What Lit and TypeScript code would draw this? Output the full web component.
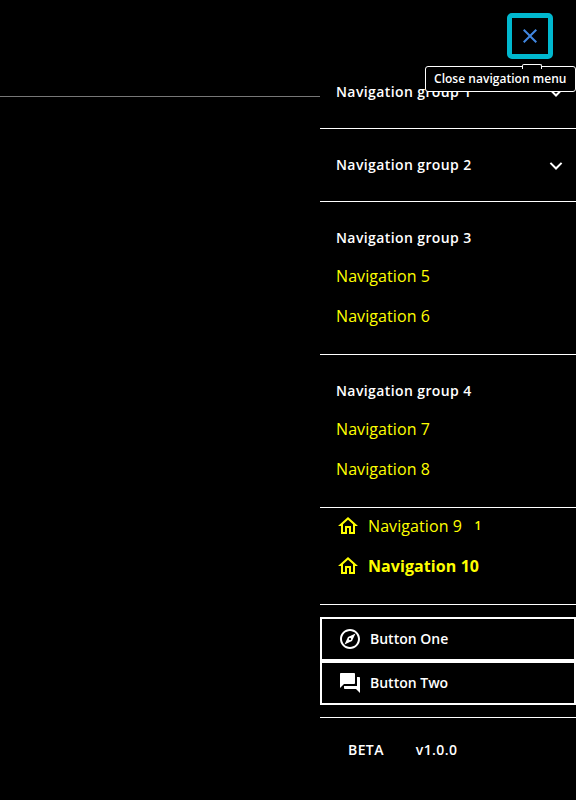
import { LitElement, html, css, svg } from "lit";
import { customElement } from "lit/decorators.js";

const icons = {
  close: svg`<path d="M19 6.41 17.59 5 12 10.59 6.41 5 5 6.41 10.59 12 5 17.59 6.41 19 12 13.41 17.59 19 19 17.59 13.41 12z"/>`,
  chevron: svg`<path d="M7.1 8.2 12 13.1l4.9-4.9L18.3 9.6 12 15.9 5.7 9.6z"/>`,
  home: svg`<path d="M12 5.69l5 4.5V18h-2v-6H9v6H7v-7.81l5-4.5M12 3 2 12h3v8h6v-6h2v6h6v-8h3L12 3z"/>`,
  compass: svg`<path d="M12 2C6.48 2 2 6.48 2 12s4.48 10 10 10 10-4.48 10-10S17.52 2 12 2zm0 18c-4.41 0-8-3.59-8-8s3.59-8 8-8 8 3.59 8 8-3.59 8-8 8zm-5.5-2.5 7.51-3.49L17.5 6.5 9.99 9.99 6.5 17.5zm5.5-6.6c.61 0 1.1.49 1.1 1.1s-.49 1.1-1.1 1.1-1.1-.49-1.1-1.1.49-1.1 1.1-1.1z"/>`,
  forum: svg`<path d="M21 6h-2v9H6v2c0 .55.45 1 1 1h11l4 4V7c0-.55-.45-1-1-1zm-4 6V3c0-.55-.45-1-1-1H3c-.55 0-1 .45-1 1v14l4-4h10c.55 0 1-.45 1-1z"/>`,
};

const icon = (name: keyof typeof icons, size = 24) =>
  html`<svg width=${size} height=${size} viewBox="0 0 24 24" fill="currentColor" aria-hidden="true">${icons[name]}</svg>`;

@customElement("app-root")
export class AppRoot extends LitElement {
  static styles = css`
    :host {
      display: block;
      position: relative;
      height: 800px;
      overflow: hidden;
      background: #000;
      color: #fff;
      font-family: "Open Sans", sans-serif;
      font-size: 14px;
      font-weight: 600;
    }
    * { box-sizing: border-box; }
    svg { display: block; flex: none; }
    .header {
      height: 97px;
      border-bottom: 1px solid #777;
    }
    .drawer {
      position: absolute;
      top: 0;
      right: 0;
      width: 256px;
      height: 800px;
      background: #000;
      display: flex;
      flex-direction: column;
    }
    .top {
      height: 56px;
      flex: none;
      display: flex;
      justify-content: flex-end;
      padding: 13px 23px 0 0;
    }
    button { font: inherit; color: inherit; background: none; margin: 0; }
    .close {
      width: 46px;
      height: 46px;
      flex: none;
      display: flex;
      align-items: center;
      justify-content: center;
      padding: 0;
      border: 5px solid #00b8cf;
      border-radius: 5px;
      color: #4187e0;
    }
    .tip {
      position: absolute;
      z-index: 2;
      top: 66px;
      right: 0;
      width: 151px;
      height: 26px;
      padding-left: 8px;
      background: #000;
      border: 1px solid #fff;
      border-radius: 3px;
      font-size: 12px;
      line-height: 24px;
      letter-spacing: 0.03px;
      white-space: nowrap;
    }
    .tip::before {
      content: "";
      position: absolute;
      left: 96px;
      top: -3px;
      width: 18px;
      height: 4px;
      background: #000;
      border: 1px solid #fff;
      border-bottom: 0;
      border-radius: 2px 2px 0 0;
    }
    .group { border-bottom: 1px solid #fff; }
    .title {
      height: 72px;
      display: flex;
      align-items: center;
      justify-content: space-between;
      padding: 0 8.4px 0 16px;
      letter-spacing: 0.4px;
    }
    .title span { padding-bottom: 2px; }
    .title svg { margin-top: 1px; }
    .open { padding-bottom: 18px; }
    .open .title { height: 54px; padding-top: 18px; }
    .item {
      height: 40px;
      display: flex;
      align-items: center;
      padding-left: 16px;
      color: #ff0;
      font-size: 16px;
      font-weight: 400;
      letter-spacing: 0.08px;
    }
    .item svg { margin-right: 8px; }
    .active { font-weight: 700; }
    .count { font-size: 12px; font-weight: 600; margin: -2px 0 0 12.5px; }
    .plain { padding-bottom: 18px; margin-top: -2px; }
    .actions {
      padding: 12px 0;
      border-bottom: 1px solid #fff;
    }
    .action {
      width: 100%;
      height: 44px;
      display: flex;
      align-items: center;
      gap: 8px;
      border: 2px solid #fff;
      padding: 0 16px;
    }
    .action span { padding-bottom: 2px; }
    .footer {
      display: flex;
      gap: 32px;
      padding: 22px 28px;
      line-height: 20px;
      letter-spacing: 0.4px;
    }
  `;

  private closed(label: string) {
    return html`<div class="group"><div class="title"><span>${label}</span>${icon("chevron")}</div></div>`;
  }

  private opened(label: string, items: string[]) {
    return html`<div class="group open">
      <div class="title"><span>${label}</span></div>
      ${items.map((i) => html`<div class="item">${i}</div>`)}
    </div>`;
  }

  render() {
    return html`
      <div class="header"></div>
      <div class="drawer">
        <div class="top"><button class="close" aria-label="Close navigation menu">${icon("close")}</button></div>
        ${this.closed("Navigation group 1")}
        ${this.closed("Navigation group 2")}
        ${this.opened("Navigation group 3", ["Navigation 5", "Navigation 6"])}
        ${this.opened("Navigation group 4", ["Navigation 7", "Navigation 8"])}
        <div class="group plain">
          <div class="item">${icon("home")}<span>Navigation 9</span><span class="count">1</span></div>
          <div class="item active">${icon("home")}<span>Navigation 10</span></div>
        </div>
        <div class="actions">
          <button class="action">${icon("compass")}<span>Button One</span></button>
          <button class="action">${icon("forum")}<span>Button Two</span></button>
        </div>
        <div class="footer"><span>BETA</span><span>v1.0.0</span></div>
      </div>
      <div class="tip" role="tooltip">Close navigation menu</div>
    `;
  }
}
